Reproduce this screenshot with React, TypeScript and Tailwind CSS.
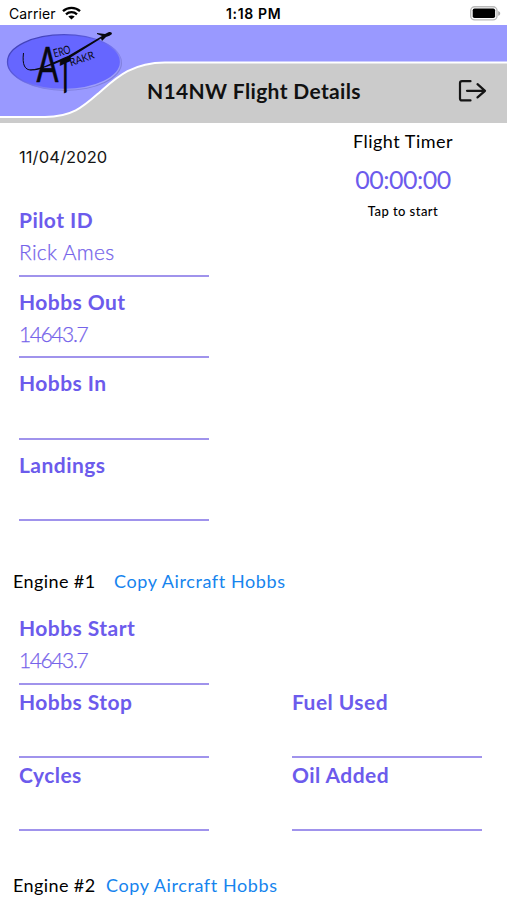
import React, { useState } from 'react';

interface FieldProps {
  label: string;
  value?: string;
  valueClass?: string;
  className?: string;
}

interface EngineHeaderProps {
  title: string;
  className: string;
  titleClass: string;
}

const Field: React.FC<FieldProps> = ({ label, value = '', valueClass = 'tracking-[-1.4px]', className = 'h-[81.5px]' }) => (
  <div className={`w-[190px] flex flex-col justify-end ${className}`}>
    <label className="h-8 text-[21px] leading-8 font-bold tracking-[0.45px] whitespace-nowrap text-[#6c5bec]">{label}</label>
    <div className={`h-[40.5px] border-b-2 border-[#a093ec] text-[21px] leading-8 font-light text-[#7563ea] [-webkit-text-stroke:0.25px_#7563ea] ${valueClass}`}>{value}</div>
  </div>
);

const EngineHeader: React.FC<EngineHeaderProps> = ({ title, className, titleClass }) => (
  <div className={`flex pl-[13px] text-[18px] leading-6 whitespace-nowrap ${className}`}>
    <span className={`tracking-[0.4px] text-black ${titleClass}`}>{title}</span>
    <button className="tracking-[0.6px] text-[#1684ee]">Copy Aircraft Hobbs</button>
  </div>
);

const StatusBar: React.FC = () => (
  <div className="relative h-[25px] flex items-center justify-between pl-[9px] pr-[6px] font-['Inter','Liberation_Sans',sans-serif] text-black">
    <div className="flex items-center gap-[6px] pt-[3px]">
      <span className="text-[14px] leading-5 tracking-[0.1px]">Carrier</span>
      <svg width="19" height="14" viewBox="0 0 19 14" fill="none" stroke="#000" strokeWidth="2.3" className="-mt-[3px]">
        <path d="M1 5.1C5.6.7 13.4.7 18 5.1" />
        <path d="M4 8.3c3.1-2.9 7.9-2.9 11 0" />
        <path d="M9.5 13.5 6.3 10.6c1.8-1.6 4.6-1.6 6.4 0Z" fill="#000" stroke="none" />
      </svg>
    </div>
    <span className="absolute left-[226px] top-[4px] text-[14px] leading-5 font-semibold tracking-[0.65px]">1:18 PM</span>
    <svg width="31" height="15" viewBox="0 0 31 15" className="mt-px">
      <rect x="0.7" y="0.7" width="26.3" height="13.2" rx="4" fill="#fff" stroke="#bababa" strokeWidth="1.4" />
      <rect x="2.7" y="2.5" width="22.4" height="9.6" rx="1.8" fill="#000" />
      <path d="M28.2 5v4.8c1.2-.4 2-1.3 2-2.4S29.4 5.4 28.2 5Z" fill="#aaa" />
    </svg>
  </div>
);

const Banner: React.FC = () => (
  <svg className="absolute inset-0" width="507" height="98" viewBox="0 25 507 98">
    <defs>
      <linearGradient id="rim" x1="0" y1="0" x2="1" y2="1">
        <stop offset="0" stopColor="#3333a5" />
        <stop offset="0.5" stopColor="#6666ee" />
        <stop offset="1" stopColor="#b8b8ff" />
      </linearGradient>
    </defs>
    <rect y="25" width="507" height="98" fill="#9999ff" />
    <path d="M0 117H45C73 117 84 106 100 92S132 62.5 165 62.5H507V123H0Z" fill="#cbcbcb" />
    <path d="M0 117H45C73 117 84 106 100 92S132 62.5 165 62.5H507" fill="none" stroke="#fff" strokeWidth="2" />
    <ellipse cx="65" cy="63" rx="57" ry="28" fill="#8080dd" />
    <ellipse cx="64" cy="62" rx="56.5" ry="27.3" fill="#6666ff" stroke="url(#rim)" strokeWidth="1.3" />
    <path d="M23.5 53C22 65 25 70 31 70C36 70 40 69 44 67" fill="none" stroke="#08080f" strokeWidth="1" />
    <path d="M30 69.7C42 69 55 61 68 56L102 36L97 34V33L105 34L109 32Q112 31.5 112 34Q110 36 106 37L102 41L101 38.5L69 58.5C57 62 44 70 30 70.3Z" fill="#08080f" />
    <g fill="#08080f">
      <text transform="translate(36.5 82.3) scale(.66 1)" fontFamily="Liberation Sans" fontSize="50" stroke="#08080f" strokeWidth="0.5">A</text>
      <text transform="translate(65.3 93) skewY(-25) scale(.36 1)" textAnchor="middle" fontFamily="Liberation Sans" fontSize="51" fontWeight="700">T</text>
      <text transform="translate(54.5 57.5) rotate(-15)" fontFamily="Lato" fontSize="11.5" textLength="17.5" lengthAdjust="spacingAndGlyphs">ERO</text>
      <text transform="translate(71 66.3) rotate(-19)" fontFamily="Lato" fontSize="10.5" textLength="25.5" lengthAdjust="spacingAndGlyphs">RAKR</text>
    </g>
  </svg>
);

const App: React.FC = () => {
  const [running, setRunning] = useState(false);

  return (
    <div className="w-[507px] h-[900px] overflow-hidden bg-white font-['Lato','Open_Sans',sans-serif]">
      <StatusBar />
      <header className="relative h-[98px]">
        <Banner />
        <div className="relative flex h-full items-end justify-between pl-[147px] pr-[20px] pb-[16px]">
          <h1 className="text-[21px] leading-8 font-bold tracking-[0.35px] whitespace-nowrap text-[#111]">N14NW Flight Details</h1>
          <button aria-label="Exit" className="mb-[4px]">
            <svg width="29" height="24" viewBox="0 0 29 24" fill="none" stroke="#151515" strokeWidth="2.2" strokeLinecap="round" strokeLinejoin="round">
              <path d="M12.5 2.2H4Q2 2.2 2 4.2V19.4Q2 21.4 4 21.4H12.5" />
              <path d="M9 11.8H27M19.5 5.2 27 11.8 19.5 18.4" />
            </svg>
          </button>
        </div>
      </header>

      <main>
        <div className="flex h-[72px] justify-between">
          <span className="pl-[19px] pt-[22px] font-['Inter','Liberation_Sans',sans-serif] text-[16.5px] leading-6 tracking-[0.1px] text-[#151515]">11/04/2020</span>
          <button onClick={() => setRunning(!running)} className="mr-[43px] flex w-[122px] flex-col items-center pt-[6px] whitespace-nowrap">
            <span className="text-[18px] leading-6 tracking-[0.5px] text-black">Flight Timer</span>
            <span className="mt-[10px] text-[25px] leading-8 tracking-[-0.5px] text-[#6c5bec]">00:00:00</span>
            <span className="mt-[8px] text-[13px] leading-4 font-medium tracking-[0.45px] text-black">Tap to start</span>
          </button>
        </div>

        <section className="pl-[19px]">
          <Field label="Pilot ID" value="Rick Ames" valueClass="tracking-[0.3px]" />
          <Field label="Hobbs Out" value="14643.7" />
          <Field label="Hobbs In" />
          <Field label="Landings" />
        </section>

        <EngineHeader title="Engine #1" className="mt-[48px]" titleClass="w-[101px]" />
        <section className="pl-[19px] pt-[18.5px]">
          <Field label="Hobbs Start" value="14643.7" className="h-[73px]" />
          <div className="flex gap-[83px]">
            <Field label="Hobbs Stop" className="h-[73.5px]" />
            <Field label="Fuel Used" className="h-[73.5px]" />
          </div>
          <div className="flex gap-[83px]">
            <Field label="Cycles" className="h-[73px]" />
            <Field label="Oil Added" className="h-[73px]" />
          </div>
        </section>
        <EngineHeader title="Engine #2" className="mt-[42px]" titleClass="w-[93px]" />
      </main>
    </div>
  );
};

export default App;
